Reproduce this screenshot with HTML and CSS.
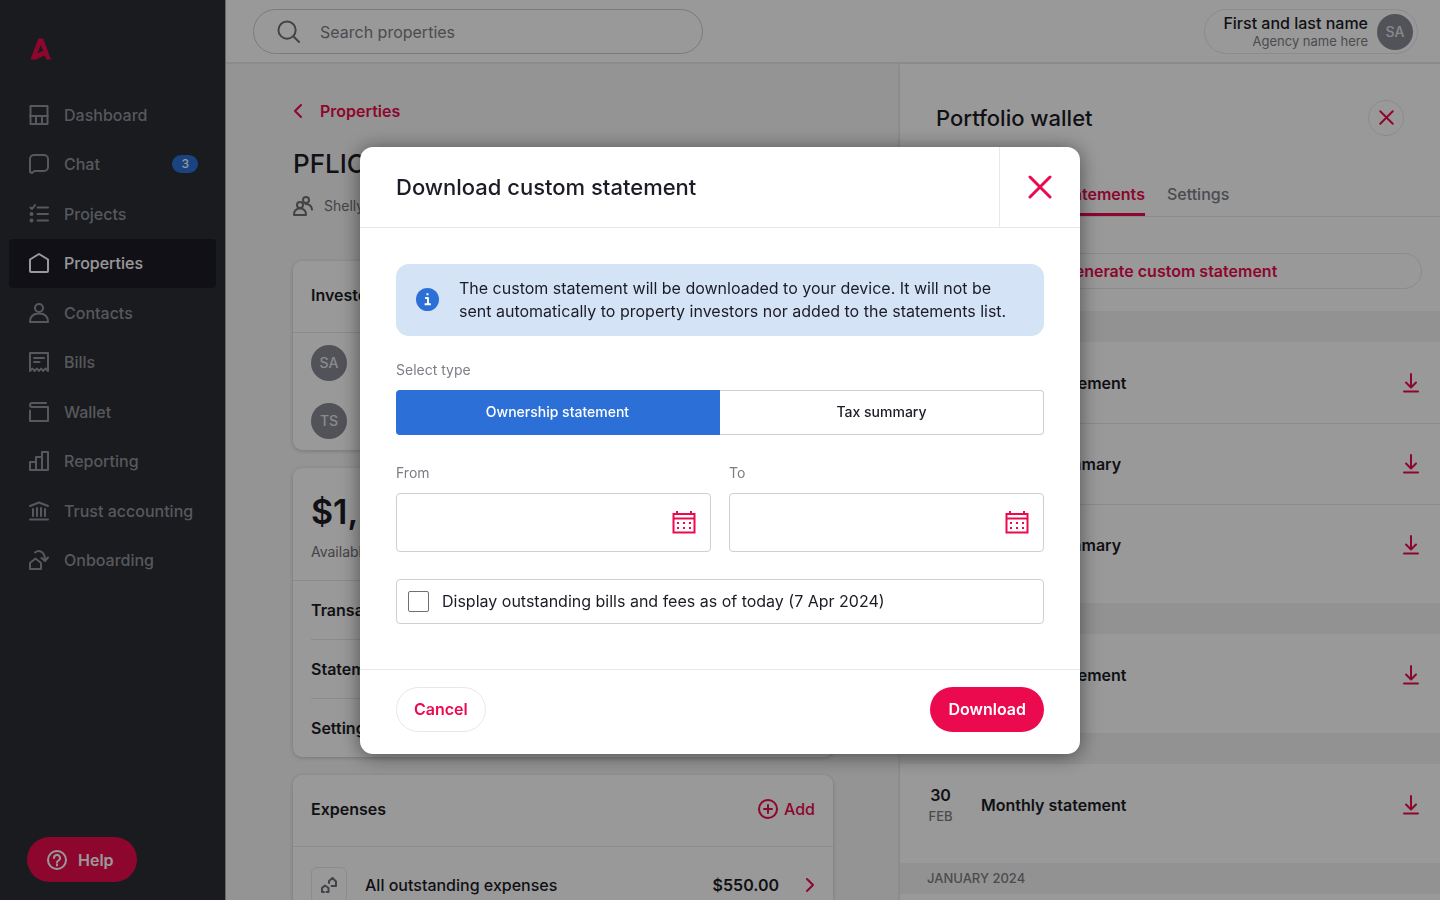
FILE: index.html
```html
<!DOCTYPE html>
<html lang="en">
<head>
    <meta charset="UTF-8">
    <meta name="viewport" content="width=device-width, initial-scale=1.0">
    <title>Portfolio wallet</title>
    <link rel="stylesheet" href="styles.css">
</head>
<body>
    <!-- shared icons -->
    <svg class="sprite" aria-hidden="true">
        <symbol id="i-download" viewBox="0 0 18 22"><path d="M9 2v13M4 10.500l5 5 5-5M2 19.500h14"/></symbol>
        <symbol id="i-close" viewBox="0 0 24 24"><path d="M2 2l20 20M22 2L2 22"/></symbol>
        <symbol id="i-calendar" viewBox="0 0 24 24"><path d="M1.500 4h21v18.500h-21zM1.500 8.500h21M5 1v3M19 1v3"/><path d="M5 13h2M11 13h2M17 13h2M5 18h2M11 18h2M17 18h2"/></symbol>
    </svg>

    <div class="app">
        <aside class="sidebar">
            <a href="#" class="logo" aria-label="Home">
                <svg width="22" height="22" viewBox="0 0 22 22"><path fill-rule="evenodd" d="M9 .5h3.500a1 1 0 0 1 1 .7L21 21.500h-4a1 1 0 0 1-1-.7l-1.200-3.300L6 21.500H.5L8 1.200a1 1 0 0 1 1-.7zM10.600 7.200L7.600 15.600l5.800-3z"/></svg>
            </a>
            <nav>
                <ul class="nav">
                    <li><a href="#"><svg viewBox="0 0 20 20"><path d="M1.500 1h17v18h-17zM1 11h18M7 11v8M13 11v8"/></svg>Dashboard</a></li>
                    <li><a href="#"><svg viewBox="0 0 20 20"><path d="M1 18V5a4 4 0 0 1 4-4h10a4 4 0 0 1 4 4v8a4 4 0 0 1-4 4H5.500L3 19z"/></svg>Chat<span class="badge">3</span></a></li>
                    <li><a href="#"><svg viewBox="0 0 20 20"><path d="M8.500 3.500H19M8.500 10H19M8.500 16.500H19M1.500 3.500l1.500 1.500L6 1"/><circle cx="2.500" cy="10" r="1"/><circle cx="2.500" cy="16.500" r="1"/></svg>Projects</a></li>
                    <li><a href="#" class="active"><svg viewBox="0 0 20 20"><path d="M1 6.500L10 1l9 5.500V18a1 1 0 0 1-1 1H2a1 1 0 0 1-1-1z"/></svg>Properties</a></li>
                    <li><a href="#"><svg viewBox="0 0 20 20"><circle cx="10" cy="5" r="4"/><path d="M1 19c0-5 3-8.500 9-8.500s9 3.500 9 8.500z"/></svg>Contacts</a></li>
                    <li><a href="#"><svg viewBox="0 0 20 20"><path d="M1 19V1h18v18l-2.500-2.500L14 19l-2-2.500L10 19l-2-2.500L5.500 19 3.500 16.500zM5 6h10M5 10h5.500"/></svg>Bills</a></li>
                    <li><a href="#"><svg viewBox="0 0 20 20"><path d="M17 1H3a2 2 0 0 0 0 4h16v14H1V8.500"/></svg>Wallet</a></li>
                    <li><a href="#"><svg viewBox="0 0 20 20"><path d="M1 11h6v8H1zM7 19V6h6v13M13 6V1h6v18H7"/></svg>Reporting</a></li>
                    <li><a href="#"><svg viewBox="0 0 20 20"><path d="M1 5l9-3.500L19 5M1 18.500h18M4 8v7M8 7v8M12 7v8M16 8v7"/></svg>Trust accounting</a></li>
                    <li><a href="#"><svg viewBox="0 0 20 20"><path d="M1 13l5.500-4.500L12 13v6H1zM6 2.500c4-3 10-1 10 7.500M12.500 8l3.500 3L19 7.500"/></svg>Onboarding</a></li>
                </ul>
            </nav>
            <button type="button" class="btn btn-primary help">
                <svg viewBox="0 0 20 20"><circle cx="10" cy="10" r="9"/><path d="M7 8a3 3 0 1 1 4.500 2.500C10.300 11.200 10 11.600 10 12.500M10 14.500v1"/></svg>
                Help
            </button>
        </aside>

        <div class="page">
            <header class="topbar">
                <label class="search">
                    <svg viewBox="0 0 24 24"><circle cx="10.500" cy="10.500" r="9"/><path d="M17 17l6 6"/></svg>
                    <input type="search" placeholder="Search properties" aria-label="Search properties">
                </label>
                <button type="button" class="user">
                    <span class="user-text">
                        <strong>First and last name</strong>
                        <small>Agency name here</small>
                    </span>
                    <span class="avatar">SA</span>
                </button>
            </header>

            <div class="columns">
                <main class="content">
                    <a href="#" class="back"><svg viewBox="0 0 10 16"><path d="M8 2L2 8l6 6"/></svg>Properties</a>
                    <h1>PFLIO</h1>
                    <p class="owner">
                        <svg viewBox="0 0 20 20"><circle cx="7" cy="9" r="3"/><path d="M1 19c0-4 2-6.500 6-6.500s6 2.500 6 6.500z"/><circle cx="13" cy="4" r="3"/><path d="M12.500 8c4 0 6 2 6.500 5.500"/></svg>
                        Shelly
                    </p>

                    <section class="card">
                        <h2 class="card-head">Investors</h2>
                        <ul class="investors">
                            <li><span class="avatar">SA</span></li>
                            <li><span class="avatar">TS</span></li>
                        </ul>
                    </section>

                    <section class="card">
                        <div class="balance">
                            <strong>$1,250</strong>
                            <span>Available</span>
                        </div>
                        <ul class="links">
                            <li><a href="#">Transactions</a></li>
                            <li><a href="#">Statements</a></li>
                            <li><a href="#">Settings</a></li>
                        </ul>
                    </section>

                    <section class="card">
                        <div class="card-head">
                            <h2>Expenses</h2>
                            <button type="button" class="add"><svg viewBox="0 0 20 20"><circle cx="10" cy="10" r="9"/><path d="M10 6v8M6 10h8"/></svg>Add</button>
                        </div>
                        <a href="#" class="expense">
                            <span class="expense-icon"><svg viewBox="0 0 16 16"><path d="M3 15H1V11l3-2.500L7.500 11v4H5.500M10.500 9H15V4.500L11.500 1 8 4v2"/></svg></span>
                            <span>All outstanding expenses</span>
                            <span class="amount">$550.00</span>
                            <svg class="chevron" viewBox="0 0 10 16"><path d="M2 2l6 6-6 6"/></svg>
                        </a>
                    </section>
                </main>

                <aside class="panel">
                    <div class="panel-head">
                        <h2>Portfolio wallet</h2>
                        <button type="button" class="round" aria-label="Close panel"><svg><use href="#i-close"/></svg></button>
                    </div>
                    <nav class="tabs">
                        <a href="#">Transactions</a>
                        <a href="#" class="active">Statements</a>
                        <a href="#">Settings</a>
                    </nav>
                    <button type="button" class="generate">Generate custom statement</button>

                    <h3 class="month">MARCH 2024</h3>
                    <ul class="statements">
                        <li><time><b>31</b>MAR</time>Monthly statement<button type="button" aria-label="Download"><svg><use href="#i-download"/></svg></button></li>
                        <li><time><b>31</b>MAR</time>Monthly summary<button type="button" aria-label="Download"><svg><use href="#i-download"/></svg></button></li>
                        <li><time><b>31</b>MAR</time>Monthly summary<button type="button" aria-label="Download"><svg><use href="#i-download"/></svg></button></li>
                    </ul>
                    <h3 class="month">MARCH 2024</h3>
                    <ul class="statements">
                        <li><time><b>30</b>MAR</time>Monthly statement<button type="button" aria-label="Download"><svg><use href="#i-download"/></svg></button></li>
                    </ul>
                    <h3 class="month">FEB 2024</h3>
                    <ul class="statements">
                        <li><time><b>30</b>FEB</time>Monthly statement<button type="button" aria-label="Download"><svg><use href="#i-download"/></svg></button></li>
                    </ul>
                    <h3 class="month">JANUARY 2024</h3>
                </aside>
            </div>
        </div>
    </div>

    <div class="overlay">
        <form class="modal" role="dialog" aria-modal="true" aria-labelledby="modal-title">
            <header class="modal-head">
                <h2 id="modal-title">Download custom statement</h2>
                <button type="button" class="modal-close" aria-label="Close"><svg><use href="#i-close"/></svg></button>
            </header>

            <div class="modal-body">
                <div class="info">
                    <svg viewBox="0 0 24 24"><circle cx="12" cy="12" r="12"/><path d="M9.500 10.500h3V17M9 17h6.500M11 6.500h2"/></svg>
                    <p>The custom statement will be downloaded to your device. It will not be sent automatically to property investors nor added to the statements list.</p>
                </div>

                <div class="field">
                    <span class="label" id="type-label">Select type</span>
                    <div class="segment" role="group" aria-labelledby="type-label">
                        <button type="button" class="active" aria-pressed="true">Ownership statement</button>
                        <button type="button" aria-pressed="false">Tax summary</button>
                    </div>
                </div>

                <div class="dates">
                    <div class="field">
                        <label class="label" for="from">From</label>
                        <div class="date">
                            <input type="text" id="from">
                            <button type="button" aria-label="Pick start date"><svg><use href="#i-calendar"/></svg></button>
                        </div>
                    </div>
                    <div class="field">
                        <label class="label" for="to">To</label>
                        <div class="date">
                            <input type="text" id="to">
                            <button type="button" aria-label="Pick end date"><svg><use href="#i-calendar"/></svg></button>
                        </div>
                    </div>
                </div>

                <label class="check">
                    <input type="checkbox">
                    Display outstanding bills and fees as of today (7 Apr 2024)
                </label>
            </div>

            <footer class="modal-foot">
                <button type="button" class="btn btn-outline">Cancel</button>
                <button type="submit" class="btn btn-primary">Download</button>
            </footer>
        </form>
    </div>
</body>
</html>
```
FILE: styles.css
```css
:root{
    --pink: #eb0a4e;
    --blue: #2c70d7;
    --ink: #1b1c25;
    --grey: #7d7e85;
    --line: #e8e8e8;
    --border: #cfcfd1;
    --bg: #f7f7f7;
}
*{
    box-sizing: border-box;
    margin: 0;
    padding: 0;
}
body{
    height: 100vh;
    overflow: hidden;
    font: 500 16px/24px Inter, "Liberation Sans", sans-serif;
    color: var(--ink);
}
ul{
    list-style: none;
}
a{
    color: inherit;
    text-decoration: none;
}
button, input{
    font: inherit;
    color: inherit;
    background: none;
    border: 0;
}
button{
    cursor: pointer;
}
svg{
    display: block;
    flex: none;
    fill: none;
    stroke: currentColor;
    stroke-width: 2;
    stroke-linecap: round;
    stroke-linejoin: round;
}
.sprite{
    position: absolute;
    width: 0;
    height: 0;
}
.app{
    display: flex;
    height: 100vh;
}

/* sidebar */
.sidebar{
    display: flex;
    flex-direction: column;
    flex: 0 0 226px;
    padding: 38px 9px 18px;
    color: #91939b;
    background: #2b2d32;
    border-right: 1px solid #aaa;
}
.logo{
    margin: 0 0 30px 21px;
}
.logo svg{
    fill: var(--pink);
    stroke: none;
}
.nav{
    display: grid;
    grid-auto-rows: 1fr;
    height: 495px;
}
.nav a{
    display: flex;
    align-items: center;
    gap: 15px;
    height: 100%;
    padding: 0 18px 0 20px;
    border-radius: 4px;
}
.nav svg, .help svg, .owner svg, .add svg{
    width: 20px;
    height: 20px;
}
.nav .active{
    color: #fff;
    background: var(--ink);
}
.badge{
    margin-left: auto;
    padding: 0 9px;
    font-size: 12px;
    line-height: 18px;
    color: #fff;
    background: var(--blue);
    border-radius: 9px;
}

/* top bar */
.page{
    display: flex;
    flex: 1;
    flex-direction: column;
    min-width: 0;
}
.topbar{
    display: flex;
    align-items: center;
    justify-content: space-between;
    padding: 9px 22px 8px 27px;
    border-bottom: 2px solid var(--line);
}
.search{
    display: flex;
    align-items: center;
    gap: 20px;
    width: 450px;
    height: 45px;
    padding: 0 23px;
    color: #6f7077;
    border: 1px solid var(--border);
    border-radius: 23px;
}
.search svg{
    width: 23px;
    height: 23px;
}
.search input{
    flex: 1;
    font-weight: 400;
    outline: 0;
}
.search input::placeholder{
    color: var(--grey);
}
.user{
    display: flex;
    align-items: center;
    gap: 9px;
    height: 45px;
    padding: 0 4px 0 18px;
    text-align: right;
    border: 1px solid var(--line);
    border-radius: 23px;
}
.user strong, .user small{
    display: block;
    font-weight: 500;
    line-height: 18px;
}
.user small{
    font-size: 13px;
    font-weight: 400;
    color: var(--grey);
}
.avatar{
    display: flex;
    align-items: center;
    justify-content: center;
    width: 36px;
    height: 36px;
    font-size: 14px;
    color: #e6e6e6;
    background: #888a93;
    border-radius: 50%;
}

/* property */
.columns{
    display: flex;
    flex: 1;
    min-height: 0;
}
.content{
    flex: 1;
    padding: 35px 67px 0;
    overflow: hidden;
    background: var(--bg);
}
.back{
    display: flex;
    align-items: center;
    gap: 17px;
    font-weight: 600;
    color: var(--pink);
}
.back svg, .chevron{
    width: 10px;
    height: 16px;
}
h1{
    margin-top: 24px;
    font-size: 26px;
    font-weight: 500;
    line-height: 34px;
}
h2{
    font-size: 16px;
    font-weight: 600;
}
.owner{
    display: flex;
    align-items: center;
    gap: 11px;
    margin: 13px 0 43px;
    font-size: 14px;
    font-weight: 400;
    color: #6f7077;
}
.card{
    margin-bottom: 18px;
    background: #fff;
    border-radius: 9px;
    box-shadow: 0 1px 4px rgba(0, 0, 0, .2);
}
.card-head{
    display: flex;
    align-items: center;
    justify-content: space-between;
    height: 72px;
    padding: 0 18px 3px;
    border-bottom: 1px solid var(--line);
}
.investors{
    display: grid;
    gap: 22px;
    padding: 12px 18px 11px;
}
.balance{
    height: 113px;
    padding: 22px 18px 0;
    border-bottom: 1px solid var(--line);
}
.balance strong, .balance span{
    display: block;
}
.balance strong{
    font-size: 34px;
    font-weight: 600;
    line-height: 44px;
}
.balance span{
    margin-top: 6px;
    font-size: 14px;
    font-weight: 400;
    color: #6f7077;
}
.links{
    padding: 0 18px;
    font-weight: 600;
}
.links li + li{
    border-top: 1px solid var(--line);
}
.links a{
    display: block;
    line-height: 58px;
}
.add{
    display: flex;
    align-items: center;
    gap: 6px;
    color: var(--pink);
}
.expense{
    display: flex;
    align-items: center;
    gap: 18px;
    height: 76px;
    padding: 0 18px;
}
.expense-icon{
    display: flex;
    align-items: center;
    justify-content: center;
    width: 36px;
    height: 36px;
    color: #6f7077;
    border: 1px solid var(--line);
    border-radius: 6px;
}
.expense-icon svg{
    width: 16px;
    height: 16px;
}
.amount{
    margin-left: auto;
    font-weight: 600;
}
.chevron{
    margin-left: 8px;
    color: var(--pink);
}

/* wallet panel */
.panel{
    flex: 0 0 540px;
    overflow: hidden;
    background: #fff;
    box-shadow: -1px 1px 2px rgba(0, 0, 0, .1);
}
.panel-head{
    display: flex;
    align-items: center;
    justify-content: space-between;
    height: 107px;
    padding: 0 36px;
}
.panel-head h2, .modal-head h2{
    font-size: 22px;
    font-weight: 500;
    line-height: 30px;
}
.round{
    display: flex;
    align-items: center;
    justify-content: center;
    width: 36px;
    height: 36px;
    color: var(--pink);
    border: 1px solid var(--line);
    border-radius: 50%;
}
.round svg{
    width: 15px;
    height: 15px;
    stroke-width: 3;
}
.tabs{
    display: flex;
    gap: 22px;
    padding: 0 36px;
    color: var(--grey);
    border-bottom: 1px solid var(--line);
}
.tabs a{
    padding: 11px 0 7px;
    border-bottom: 3px solid transparent;
}
.tabs .active{
    font-weight: 600;
    color: var(--pink);
    border-color: var(--pink);
}
.generate{
    display: block;
    width: calc(100% - 36px);
    height: 36px;
    margin: 36px 18px 22px;
    font-weight: 600;
    color: var(--pink);
    border: 1px solid var(--line);
    border-radius: 18px;
}
.month{
    padding: 0 27px;
    font-size: 13px;
    font-weight: 500;
    line-height: 31px;
    color: var(--grey);
    background: #f3f3f3;
}
.statements{
    padding-bottom: 18px;
}
.statements li{
    display: flex;
    align-items: center;
    height: 81px;
    padding: 0 18px;
    font-weight: 600;
}
.statements li + li{
    border-top: 1px solid var(--line);
}
.statements time{
    width: 45px;
    margin-right: 18px;
    font-size: 13px;
    font-weight: 500;
    line-height: 20px;
    text-align: center;
    color: var(--grey);
}
.statements b{
    display: block;
    font-size: 16px;
    font-weight: 600;
    line-height: 22px;
    color: var(--ink);
}
.statements button{
    margin-left: auto;
    color: var(--pink);
}
.statements svg{
    width: 22px;
    height: 22px;
}

/* modal */
.overlay{
    position: fixed;
    inset: 0;
    display: flex;
    align-items: center;
    justify-content: center;
    background: rgba(0, 0, 0, .4);
}
.modal{
    width: 720px;
    max-width: 100%;
    overflow: hidden;
    background: #fff;
    border-radius: 13px;
    box-shadow: 0 2px 20px rgba(0, 0, 0, .5);
}
.modal-head{
    display: flex;
    align-items: center;
    justify-content: space-between;
    height: 81px;
    padding-left: 36px;
    border-bottom: 1px solid var(--line);
}
.modal-close{
    display: flex;
    align-items: center;
    justify-content: center;
    width: 81px;
    height: 100%;
    color: var(--pink);
    border-left: 1px solid var(--line);
}
.modal-close svg{
    width: 24px;
    height: 24px;
    stroke-width: 3;
}
.modal-body{
    padding: 36px 36px 45px;
}
.info{
    display: flex;
    align-items: center;
    gap: 20px;
    padding: 13px 20px;
    font-weight: 400;
    line-height: 23px;
    background: #d5e3f7;
    border-radius: 13px;
}
.info svg{
    width: 23px;
    height: 23px;
    stroke: #fff;
    stroke-linecap: butt;
}
.info circle{
    fill: var(--blue);
    stroke: none;
}
.field{
    margin-top: 24px;
}
.label{
    display: block;
    margin-bottom: 10px;
    font-size: 14px;
    font-weight: 400;
    line-height: 20px;
    color: var(--grey);
}
.segment{
    display: flex;
    height: 45px;
}
.segment button{
    flex: 1;
    font-size: 14px;
    border: 1px solid var(--border);
    border-left: 0;
    border-radius: 0 4px 4px 0;
}
.segment .active{
    color: #fff;
    background: var(--blue);
    border-color: var(--blue);
    border-radius: 4px 0 0 4px;
}
.dates{
    display: grid;
    grid-template-columns: repeat(2, minmax(0, 1fr));
    gap: 18px;
    padding: 4px 0 27px;
}
.date{
    display: flex;
    height: 59px;
    border: 1px solid var(--border);
    border-radius: 4px;
}
.date input{
    flex: 1;
    min-width: 0;
    padding: 0 14px;
    outline: 0;
}
.date button{
    padding: 0 14px;
    color: var(--pink);
}
.date svg{
    width: 24px;
    height: 24px;
    stroke-linecap: butt;
    stroke-linejoin: miter;
}
.check{
    display: flex;
    align-items: center;
    gap: 13px;
    height: 45px;
    padding: 0 11px;
    font-weight: 400;
    border: 1px solid var(--border);
    border-radius: 4px;
}
.check input{
    appearance: none;
    width: 21px;
    height: 21px;
    border: 1px solid #6f7077;
    border-radius: 2px;
}
.check input:checked{
    background: var(--blue);
}
.modal-foot{
    display: flex;
    justify-content: space-between;
    padding: 17px 36px 22px;
    border-top: 1px solid var(--line);
}
.btn{
    height: 45px;
    padding: 0 18px;
    font-weight: 600;
    border-radius: 23px;
}
.btn-primary{
    color: #fff;
    background: var(--pink);
}
.btn-outline{
    padding: 0 17px;
    color: var(--pink);
    border: 1px solid var(--line);
}
.help{
    display: flex;
    align-items: center;
    align-self: flex-start;
    gap: 11px;
    margin: auto 0 0 18px;
    padding: 0 23px 0 20px;
}
```
